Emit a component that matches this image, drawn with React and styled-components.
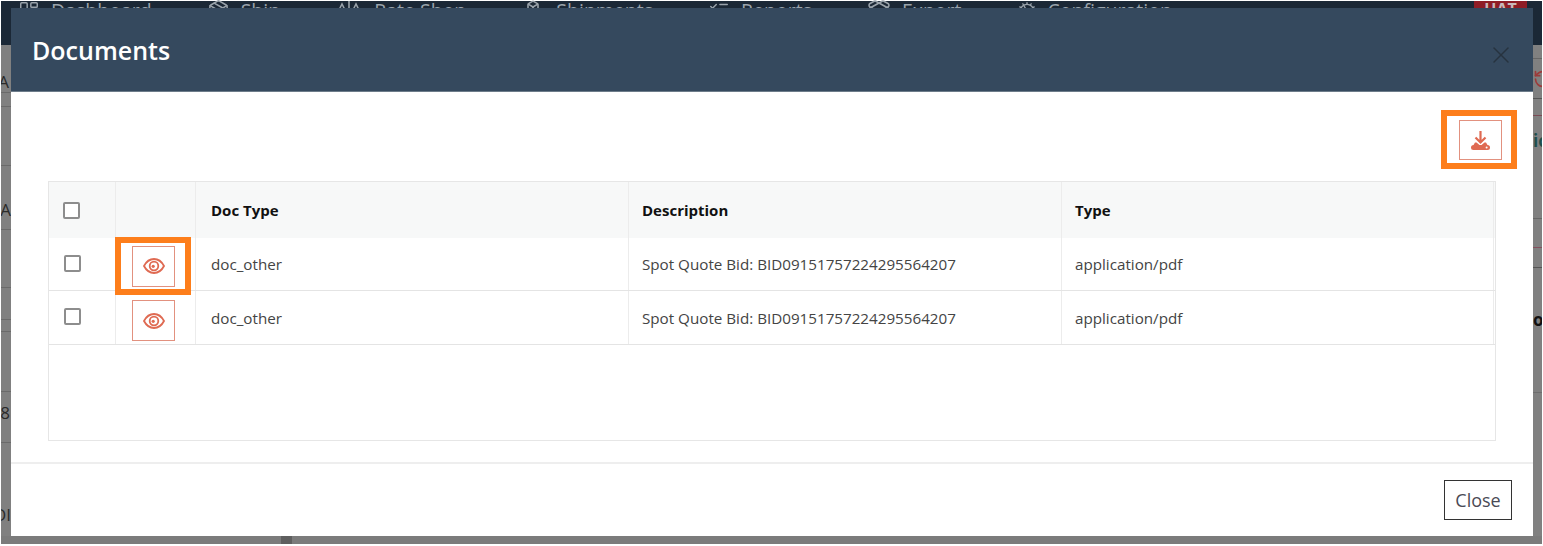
import React from "react";
import styled, { createGlobalStyle } from "styled-components";
import {
  LayoutDashboard,
  Boxes,
  ListChecks,
  PackageOpen,
  PackagePlus,
  Cog,
  X,
  RotateCcw,
} from "lucide-react";

const GlobalStyle = createGlobalStyle`
  html, body {
    margin: 0;
    padding: 0;
    height: 546px;
    overflow: hidden;
    background: #fff;
    font-family: "Open Sans", "Liberation Sans", sans-serif;
  }
`;

const Page = styled.div`
  position: relative;
  box-sizing: border-box;
  height: 546px;
  padding: 1px 1px 2px 1px;
  display: flex;
  flex-direction: column;
  background: #fff;
  overflow: hidden;
`;

const Nav = styled.div`
  height: 44px;
  flex: none;
  display: flex;
  align-items: flex-start;
  justify-content: space-between;
  padding: 0 15px 0 17px;
  background: #1b2836;
`;

const NavItems = styled.div`
  display: flex;
  gap: 55px;
`;

const NavItem = styled.div`
  display: flex;
  align-items: center;
  gap: 11px;
  height: 19px;
  color: #9aa3ab;
  font-size: 19.500px;
  white-space: nowrap;
`;

const Badge = styled.div`
  background: #8f1d26;
  color: #c9b9ba;
  font-size: 16px;
  font-weight: 700;
  width: 53px;
  height: 14px;
  text-align: center;
  line-height: 17px;
`;

const Backdrop = styled.div`
  flex: 1;
  display: flex;
  justify-content: space-between;
  background: #808080;
  overflow: hidden;
`;

const Rail = styled.div`
  width: ${(p) => p.$width}px;
  display: flex;
  flex-direction: column;
  overflow: hidden;
`;

const RailRow = styled.div`
  box-sizing: border-box;
  flex: none;
  width: 100%;
  height: ${(p) => p.$h}px;
  padding-right: ${(p) => p.$pr || 0}px;
  display: flex;
  align-items: center;
  justify-content: ${(p) => (p.$side === "right" ? "flex-start" : "flex-end")};
  border-bottom: 1px solid ${(p) => p.$line || "transparent"};
  color: ${(p) => p.$color || "#2a2a2a"};
  font-size: 17px;
  font-weight: ${(p) => (p.$bold ? 700 : 400)};
  white-space: nowrap;
  overflow: hidden;
`;

const RailIcon = styled(RotateCcw)`
  flex: none;
`;

const BottomBar = styled.div`
  height: 8px;
  flex: none;
  padding-left: 280px;
  background: #7b7b7b;
`;

const Thumb = styled.div`
  width: 11px;
  height: 100%;
  background: #5f5f5f;
`;

const Modal = styled.div`
  position: absolute;
  top: 8px;
  left: 11px;
  width: 1522px;
  height: 528px;
  display: flex;
  flex-direction: column;
  background: #fff;
`;

const ModalHeader = styled.div`
  height: 84px;
  flex: none;
  display: flex;
  justify-content: space-between;
  padding: 0 18px 0 21px;
  background: #35495e;
  border-bottom: 1px solid #6d7c8a;
  box-sizing: border-box;
`;

const Title = styled.h1`
  margin: 24px 0 0;
  color: #fff;
  font-size: 25px;
  line-height: 36px;
  font-weight: 600;
`;

const CloseIcon = styled.div`
  margin-top: 33px;
  color: #27333f;
  height: 28px;
`;

const ModalBody = styled.div`
  flex: 1;
  padding: 28px 37px 21px;
  display: flex;
  flex-direction: column;
  box-sizing: border-box;
`;

const Toolbar = styled.div`
  flex: none;
  display: flex;
  justify-content: flex-end;
  margin-right: -6px;
  height: 40px;
  margin-bottom: 21px;
`;

const IconButton = styled.button`
  position: relative;
  box-sizing: border-box;
  width: 43px;
  height: ${(p) => p.$h}px;
  margin-top: ${(p) => p.$mt || 0}px;
  padding: 0;
  display: flex;
  align-items: center;
  justify-content: center;
  background: #fff;
  border: 1px solid #e2917f;
  color: #df6a52;
`;

const Callout = styled.span`
  position: absolute;
  top: ${(p) => p.$top}px;
  bottom: ${(p) => p.$bottom}px;
  left: ${(p) => p.$left}px;
  right: ${(p) => p.$right}px;
  border: 6px solid #fd7e1b;
  pointer-events: none;
`;

const TableBox = styled.div`
  flex: 1;
  border: 1px solid #e6e6e6;
`;

const Row = styled.div`
  display: grid;
  grid-template-columns: 67px 80px 433px 433px 432px;
  height: ${(p) => p.$h}px;
  box-sizing: border-box;
  background: ${(p) => (p.$head ? "#f7f8f8" : "#fff")};
  border-bottom: ${(p) => (p.$head ? "none" : "1px solid #e4e4e4")};
`;

const Cell = styled.div`
  display: flex;
  align-items: center;
  box-sizing: border-box;
  padding-left: ${(p) => p.$pad || 13}px;
  border-right: 1px solid #ececec;
  color: ${(p) => (p.$head ? "#111" : "#444")};
  font-size: ${(p) => (p.$head ? 15 : 15.200)}px;
  font-weight: ${(p) => (p.$head ? 700 : 400)};
  white-space: nowrap;
`;

const Check = styled.span`
  box-sizing: border-box;
  width: 17px;
  height: 17px;
  margin-bottom: ${(p) => p.$mb || 0}px;
  border: 2px solid #8d8d8d;
  border-radius: 2px;
  background: #fff;
`;

const ModalFooter = styled.div`
  height: 74px;
  flex: none;
  box-sizing: border-box;
  display: flex;
  justify-content: flex-end;
  padding: 16px 21px 0 0;
  border-top: 2px solid #eeeeee;
`;

const CloseButton = styled.button`
  box-sizing: border-box;
  width: 68px;
  height: 40px;
  padding: 0;
  background: #fff;
  border: 1px solid #333;
  color: #4a4a55;
  font-family: inherit;
  font-size: 18px;
`;

const EyeIcon = () => (
  <svg width="22" height="18" viewBox="0 0 22 18" fill="none" stroke="currentColor">
    <path d="M1 9C3.500 4.200 7 2 11 2s7.500 2.200 10 7c-2.500 4.800-6 7-10 7S3.500 13.800 1 9Z" strokeWidth="1.800" />
    <circle cx="11" cy="9" r="4.300" strokeWidth="1.800" />
    <circle cx="10.200" cy="9.300" r="1.600" fill="currentColor" stroke="none" />
  </svg>
);

const DownloadIcon = () => (
  <svg width="19" height="19" viewBox="0 0 19 19" fill="currentColor">
    <path d="M9.500 0v11.500M4.500 6.500l5 5 5-5" fill="none" stroke="currentColor" strokeWidth="2.200" />
    <path d="M2.500 14l1.500-2.500h1.500l3 2.500h2l3-2.500H15l1.500 2.500Z" />
    <rect x="0" y="14" width="19" height="5" rx="2.500" />
    <circle cx="15.600" cy="16.500" r="1" fill="#fff" />
  </svg>
);

const RateIcon = () => (
  <svg width="28" height="19" viewBox="0 0 28 19" fill="none" stroke="currentColor" strokeWidth="1.600">
    <path d="M1.500 14L7 3l5.500 11M15.500 14L21 3l5.500 11M14 0v19" />
  </svg>
);

const iconProps = { strokeWidth: 1.600 };

const navLinks = [
  { label: "Dashboard", icon: <LayoutDashboard size={22} {...iconProps} /> },
  { label: "Ship", icon: <PackagePlus size={23} {...iconProps} /> },
  { label: "Rate Shop", icon: <RateIcon /> },
  { label: "Shipments", icon: <Boxes size={24} {...iconProps} /> },
  { label: "Reports", icon: <ListChecks size={22} {...iconProps} /> },
  { label: "Export", icon: <PackageOpen size={24} {...iconProps} /> },
  { label: "Configuration", icon: <Cog size={20} {...iconProps} /> },
];

const leftRows = [
  { h: 25 },
  { h: 23, text: "A", line: "#6a6a6a", pr: 2 },
  { h: 14, line: "#6a6a6a" },
  { h: 59, line: "#6a6a6a" },
  { h: 24 },
  { h: 40, text: "A", line: "#6a6a6a" },
  { h: 58, line: "#6a6a6a" },
  { h: 32, line: "#6a6a6a" },
  { h: 12, line: "#6a6a6a" },
  { h: 60, line: "#6a6a6a" },
  { h: 42, text: "8", pr: 1 },
  { h: 9, line: "#6a6a6a" },
  { h: 52 },
  { h: 40, text: "OI" },
];

const rightRows = [
  { h: 14, line: "#666" },
  { h: 40, icon: true, line: "#555" },
  { h: 17, line: "#7a4b55" },
  { h: 50, text: "ic", color: "#1f4f4c", bold: true },
  { h: 53, line: "#666" },
  { h: 29, line: "#84505e" },
  { h: 20, line: "#555" },
  { h: 32 },
  { h: 40, text: "ot", color: "#111", bold: true },
  { h: 53, line: "#6e6e6e" },
];

const docs = [
  { id: 1, type: "doc_other", description: "Spot Quote Bid: BID09151757224295564207", mime: "application/pdf", highlighted: true },
  { id: 2, type: "doc_other", description: "Spot Quote Bid: BID09151757224295564207", mime: "application/pdf" },
];

export default function App() {
  return (
    <Page>
      <GlobalStyle />
      <Nav>
        <NavItems>
          {navLinks.map(({ label, icon }) => (
            <NavItem key={label}>
              {icon}
              {label}
            </NavItem>
          ))}
        </NavItems>
        <Badge>UAT</Badge>
      </Nav>

      <Backdrop>
        <Rail $width={10}>
          {leftRows.map((row, i) => (
            <RailRow key={i} $h={row.h} $line={row.line} $pr={row.pr}>
              {row.text}
            </RailRow>
          ))}
        </Rail>
        <Rail $width={9}>
          {rightRows.map((row, i) => (
            <RailRow key={i} $side="right" $h={row.h} $line={row.line} $color={row.color} $bold={row.bold}>
              {row.icon ? <RailIcon size={20} color="#9c3a3a" /> : row.text}
            </RailRow>
          ))}
        </Rail>
      </Backdrop>
      <BottomBar>
        <Thumb />
      </BottomBar>

      <Modal>
        <ModalHeader>
          <Title>Documents</Title>
          <CloseIcon>
            <X size={28} strokeWidth={1.200} />
          </CloseIcon>
        </ModalHeader>

        <ModalBody>
          <Toolbar>
            <IconButton $h={40}>
              <Callout $top={-11} $bottom={-10} $left={-19} $right={-16} />
              <DownloadIcon />
            </IconButton>
          </Toolbar>

          <TableBox>
            <Row $head $h={56}>
              <Cell $pad={14}>
                <Check />
              </Cell>
              <Cell />
              <Cell $head $pad={15}>Doc Type</Cell>
              <Cell $head>Description</Cell>
              <Cell $head>Type</Cell>
            </Row>
            {docs.map((doc) => (
              <Row key={doc.id} $h={doc.highlighted ? 53 : 54}>
                <Cell $pad={15}>
                  <Check $mb={2} />
                </Cell>
                <Cell $pad={16}>
                  <IconButton $h={41} $mt={doc.highlighted ? 4 : 6}>
                    {doc.highlighted && <Callout $top={-10} $bottom={-9} $left={-18} $right={-17} />}
                    <EyeIcon />
                  </IconButton>
                </Cell>
                <Cell $pad={15}>{doc.type}</Cell>
                <Cell>{doc.description}</Cell>
                <Cell>{doc.mime}</Cell>
              </Row>
            ))}
          </TableBox>
        </ModalBody>

        <ModalFooter>
          <CloseButton>Close</CloseButton>
        </ModalFooter>
      </Modal>
    </Page>
  );
}
